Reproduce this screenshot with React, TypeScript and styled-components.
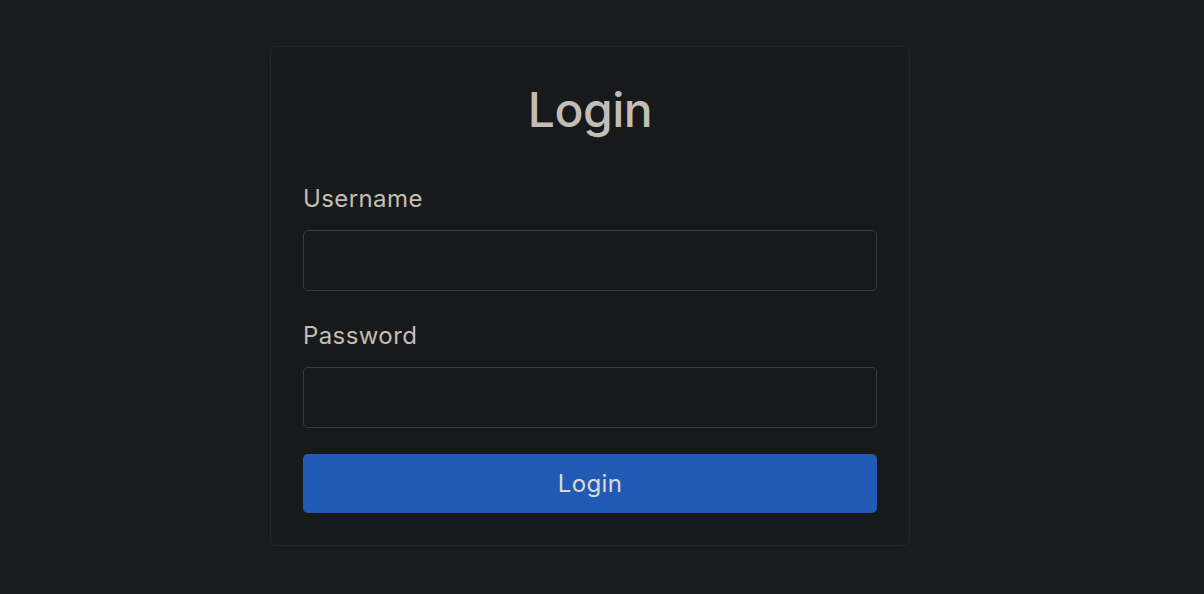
import React from "react";
import styled, { createGlobalStyle } from "styled-components";

const Global = createGlobalStyle`
  html, body { margin: 0; padding: 0; background: #1b1d1e; }
  body { font-family: Inter, "Noto Sans", sans-serif; color: #c2beb6; }
  * { box-sizing: border-box; }
`;

const Page = styled.div`
  width: 1204px;
  height: 594px;
  display: flex;
  justify-content: flex-start;
  align-items: flex-start;
  padding: 46px 0 0 270px;
`;

const Card = styled.div`
  width: 640px;
  background: #18191b;
  border: 1px solid #25272a;
  border-radius: 7px;
  padding: 32px 32px 32px;
  box-shadow: 0 4px 16px rgba(0, 0, 0, 0.15);
`;

const Title = styled.h1`
  margin: 2px 0 43px;
  text-align: center;
  font-size: 48px;
  font-weight: 550;
  line-height: 58px;
  color: #c2beb6;
  letter-spacing: -0.5px;
`;

const Form = styled.form`
  display: flex;
  flex-direction: column;
`;

const Group = styled.div<{ $mb: number }>`
  display: flex;
  flex-direction: column;
  margin-bottom: ${(p) => p.$mb}px;
`;

const Label = styled.label`
  font-size: 24px;
  line-height: 33px;
  letter-spacing: 0.4px;
  margin-bottom: 15px;
  color: #c2beb6;
`;

const Input = styled.input`
  height: 61px;
  background: #18191b;
  border: 1px solid #3a3c40;
  border-radius: 5px;
  color: #c2beb6;
  font-size: 20px;
  padding: 0 16px;
  outline: none;
`;

const Button = styled.button`
  height: 59px;
  border: none;
  border-radius: 5px;
  background: #205ab4;
  color: #dcdad6;
  font-family: Inter, "Noto Sans", sans-serif;
  font-size: 24px;
  letter-spacing: 0.4px;
  cursor: pointer;
`;

export default function App() {
  return (
    <>
      <Global />
      <Page>
        <Card>
          <Title>Login</Title>
          <Form onSubmit={(e) => e.preventDefault()}>
            <Group $mb={28}>
              <Label>Username</Label>
              <Input type="text" />
            </Group>
            <Group $mb={26}>
              <Label>Password</Label>
              <Input type="password" />
            </Group>
            <Button type="submit">Login</Button>
          </Form>
        </Card>
      </Page>
    </>
  );
}
